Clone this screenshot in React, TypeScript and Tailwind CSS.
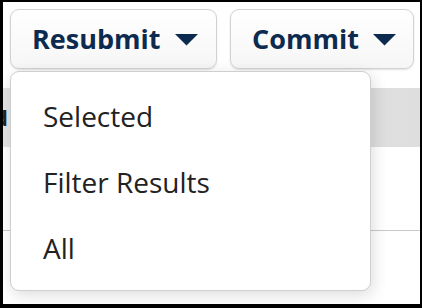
import { ReactNode } from "react";

function Caret() {
  return (
    <svg width="23" height="12" viewBox="0 0 23 12" className="ml-[14px] mt-[2px]">
      <path d="M0 0 L23 0 L11.5 11.5 Z" fill="#0d2a4f" />
    </svg>
  );
}

function ToolButton({ label, width }: { label: string; width: string }) {
  return (
    <button
      className={`${width} h-[60px] flex items-center pl-[21px] rounded-[9px] border border-[#d2d2d2] bg-gradient-to-b from-white to-[#f6f6f6] shadow-[0_1px_2px_rgba(0,0,0,0.12)] text-[#0d2a4f] text-[27px] font-bold`}
    >
      {label}
      <Caret />
    </button>
  );
}

function MenuItem({ children }: { children: ReactNode }) {
  return (
    <div className="h-[66px] flex items-center pl-[32px] text-[28px] text-[#222222]">
      {children}
    </div>
  );
}

export default function App() {
  return (
    <div className="w-[422px] h-[308px] bg-black pl-[3px] pt-[2px] pr-[2px] pb-[4px] font-['Open_Sans',sans-serif]">
      <div className="relative h-full w-full bg-white overflow-hidden">
        {/* toolbar */}
        <div className="flex pl-[7px] pt-[7px] gap-[13px]">
          <ToolButton label="Resubmit" width="w-[207px]" />
          <ToolButton label="Commit" width="w-[184px]" />
        </div>

        {/* table behind the menu */}
        <div className="mt-[19px] h-[59px] bg-gradient-to-r from-[#e4e4e4] to-[#dedede] flex items-center overflow-hidden">
          <span className="-ml-[9px] text-[22px] font-bold text-[#222]">d</span>
        </div>
        <div className="h-[83px]" />
        <div className="h-px bg-[#c9c9c9]" />

        {/* dropdown menu */}
        <div className="absolute left-[7px] top-[69px] w-[361px] h-[220px] rounded-[9px] border border-[#cfcfcf] bg-white pt-[11px] shadow-[2px_4px_16px_rgba(0,0,0,0.14)]">
          <MenuItem>Selected</MenuItem>
          <MenuItem>Filter Results</MenuItem>
          <MenuItem>All</MenuItem>
        </div>
      </div>
    </div>
  );
}
